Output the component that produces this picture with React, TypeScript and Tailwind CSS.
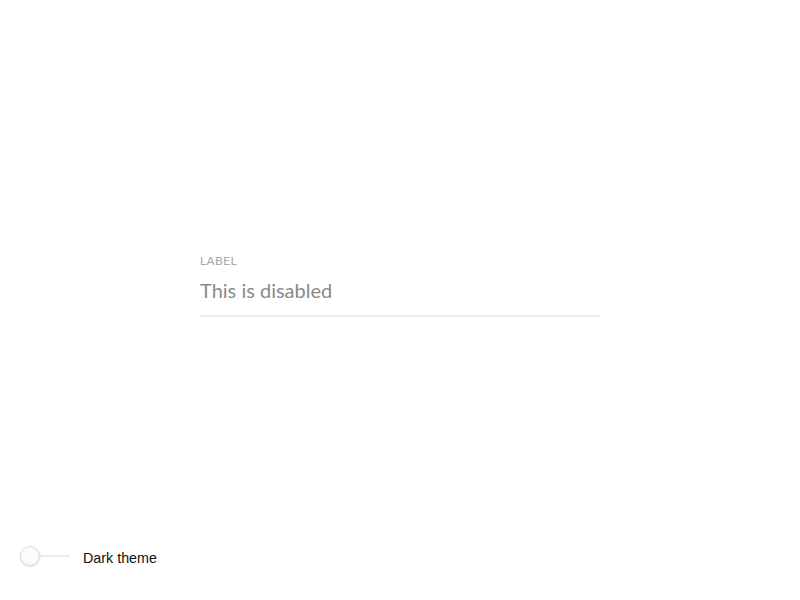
import React, { useState } from "react";

const Toggle = ({ on, onChange }: { on: boolean; onChange: () => void }) => {
  return (
    <button
      type="button"
      onClick={onChange}
      className="relative flex h-5 w-[50px] items-center self-start"
    >
      <span className="h-[2px] w-full rounded-full bg-[#ececec]" />
      <span
        className={`absolute top-0 h-5 w-5 rounded-full border border-[#dcdcdc] bg-[#fbfbfb] shadow-[0_1px_2px_rgba(0,0,0,0.12)] ${
          on ? "left-[30px]" : "left-0"
        }`}
      />
    </button>
  );
};

const App = () => {
  const [dark, setDark] = useState(false);

  return (
    <div className="flex h-screen flex-col bg-white">
      <div className="flex flex-1 items-center justify-center pt-[24px]">
        <div className="w-[400px] font-['Lato','Liberation_Sans',sans-serif]">
          <label className="block text-[12px] leading-4 tracking-[0.03em] text-[#a9a9a9] uppercase">
            Label
          </label>
          <input
            disabled
            value="This is disabled"
            className="mt-[7px] block w-full border-b-2 border-[#eeeeee] bg-transparent pb-[11px] text-[20px] leading-7 text-[#8a8a8a] outline-none"
          />
        </div>
      </div>

      <div className="flex items-start gap-[13px] px-5 pb-[30px] font-['Liberation_Sans',Arial,sans-serif]">
        <Toggle on={dark} onChange={() => setDark(!dark)} />
        <span className="text-[14.3px] leading-6 text-[#111]">Dark theme</span>
      </div>
    </div>
  );
};

export default App;
